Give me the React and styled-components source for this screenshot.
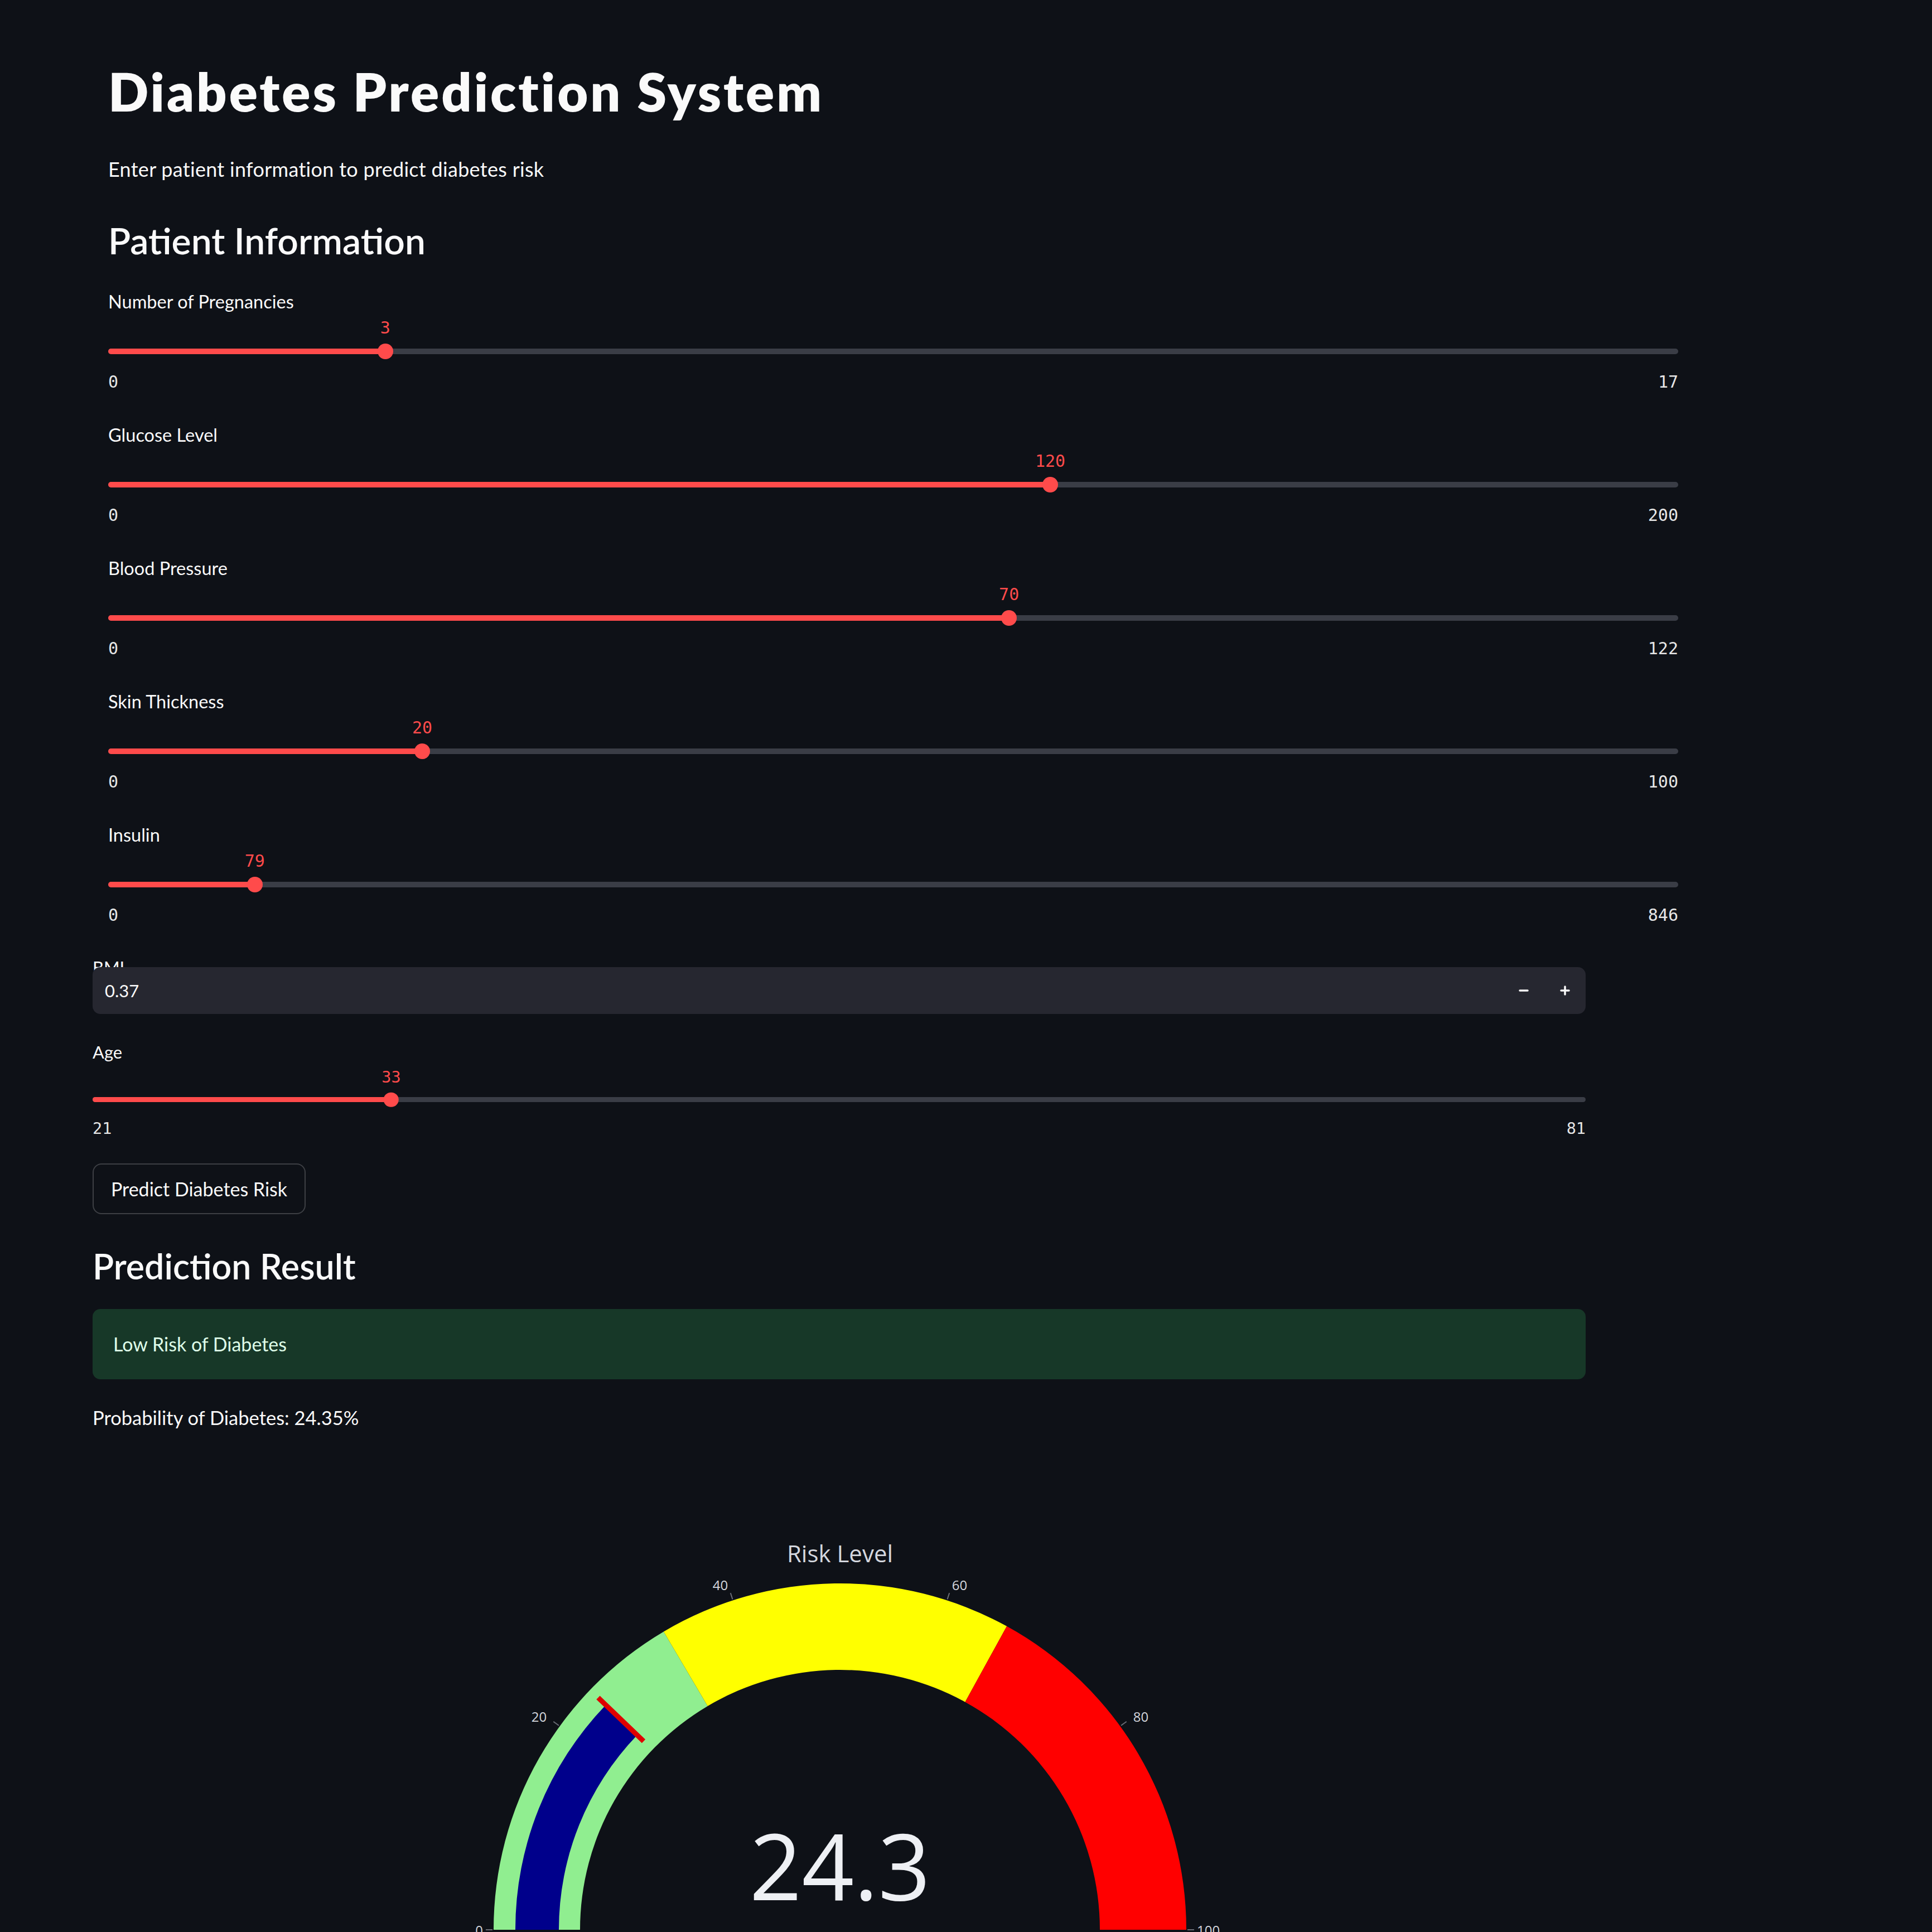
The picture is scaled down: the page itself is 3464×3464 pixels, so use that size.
import React from "react";
import styled, { createGlobalStyle } from "styled-components";
import { Minus, Plus } from "lucide-react";

const GlobalStyle = createGlobalStyle`
  html, body {
    margin: 0;
    background-color: #0e1117;
  }

  body {
    font-family: "Lato", "Noto Sans", sans-serif;
    color: #fafafa;
  }
`;

const Page = styled.div`
  height: 3464px;
  overflow: hidden;
  box-sizing: border-box;
  padding-top: 106px;
`;

const Section = styled.section`
  --k: ${(p) => p.$k};
  margin-left: ${(p) => p.$left}px;
  width: ${(p) => p.$width}px;
`;

const Title = styled.h1`
  margin: 0;
  font-size: 95px;
  line-height: 1.2;
  font-weight: 800;
  letter-spacing: 4px;
`;

const Subtitle = styled.p`
  margin: 61px 0 0;
  font-size: 36px;
  line-height: 44px;
  letter-spacing: 0.3px;
`;

const SectionHeading = styled.h2`
  margin: calc(69px * var(--k)) 0 0;
  font-size: calc(66px * var(--k));
  line-height: calc(74px * var(--k));
  font-weight: 600;
`;

const ResultHeading = styled(SectionHeading)`
  margin-top: 58px;
`;

const SliderList = styled.div`
  margin-top: calc(51px * var(--k));
`;

const SliderBlock = styled.div`
  margin-bottom: calc(53px * var(--k));
`;

const FieldLabel = styled.label`
  display: block;
  font-size: calc(32.5px * var(--k));
  line-height: calc(44px * var(--k));
  color: #fafafa;
`;

const Rail = styled.div`
  position: relative;
  display: flex;
  align-items: center;
  height: calc(28px * var(--k));
  margin-top: calc(53px * var(--k));
`;

const Track = styled.div`
  width: 100%;
  height: calc(10px * var(--k));
  border-radius: 6px;
  background-color: #3a3d46;
  overflow: hidden;
`;

const Fill = styled.div`
  height: 100%;
  background-color: #ff4b4b;
`;

const Thumb = styled.div`
  position: absolute;
  top: 50%;
  width: calc(28px * var(--k));
  height: calc(28px * var(--k));
  border-radius: 50%;
  background-color: #ff4b4b;
  transform: translate(-50%, -50%);
`;

const ThumbValue = styled.div`
  position: absolute;
  left: 50%;
  bottom: calc(100% + 8px * var(--k));
  transform: translateX(-50%);
  font-family: "DejaVu Sans Mono", "Liberation Mono", monospace;
  font-size: calc(30px * var(--k));
  line-height: calc(40px * var(--k));
  color: #ff4b4b;
  white-space: nowrap;
`;

const Ticks = styled.div`
  display: flex;
  justify-content: space-between;
  margin-top: calc(21px * var(--k));
  font-family: "DejaVu Sans Mono", "Liberation Mono", monospace;
  font-size: calc(30px * var(--k));
  line-height: calc(40px * var(--k));
  color: #e6e6e6;
`;

const NumberBox = styled.div`
  position: relative;
  display: flex;
  align-items: center;
  height: 84px;
  margin-top: -22px;
  border-radius: 14px;
  background-color: #262730;
`;

const NumberValue = styled.span`
  flex: 1;
  padding-left: 22px;
  font-size: 31px;
  color: #fafafa;
`;

const StepButton = styled.span`
  display: flex;
  align-items: center;
  justify-content: center;
  width: 74px;
  height: 100%;
  color: #fafafa;
`;

const PredictButton = styled.button`
  display: flex;
  align-items: center;
  justify-content: center;
  width: 382px;
  height: 91px;
  margin-top: -7px;
  padding: 0;
  border: 2px solid rgba(250, 250, 250, 0.2);
  border-radius: 16px;
  background: transparent;
  font-family: inherit;
  font-size: 34px;
  color: #fafafa;
`;

const Alert = styled.div`
  display: flex;
  align-items: center;
  height: 126px;
  margin-top: 41px;
  padding-left: 37px;
  border-radius: 14px;
  background-color: #173828;
  color: #dffde9;
  font-size: 34px;
`;

const Probability = styled.p`
  margin: 48px 0 0;
  font-size: 34.5px;
  line-height: 42px;
`;

const GaugeSvg = styled.svg`
  display: block;
  width: 100%;
  height: 864px;
  margin-top: 36px;
  overflow: visible;

  text {
    font-family: "Open Sans", "Noto Sans", sans-serif;
  }
`;

const Slider = ({ label, value, min, max }) => {
  const pct = ((value - min) / (max - min)) * 100;
  return (
    <SliderBlock>
      <FieldLabel>{label}</FieldLabel>
      <Rail>
        <Track>
          <Fill style={{ width: `${pct}%` }} />
        </Track>
        <Thumb style={{ left: `${pct}%` }}>
          <ThumbValue>{value}</ThumbValue>
        </Thumb>
      </Rail>
      <Ticks>
        <span>{min}</span>
        <span>{max}</span>
      </Ticks>
    </SliderBlock>
  );
};

// gauge geometry, in the svg's own pixels
const cx = 1340;
const cy = 861;
const R_OUT = 621;
const R_IN = 466;

const polar = (r, v) => {
  const a = Math.PI * (1 - v / 100);
  return [cx + r * Math.cos(a), cy - r * Math.sin(a)];
};

const band = (v1, v2, r1, r2) => {
  const [ax, ay] = polar(r2, v1);
  const [bx, by] = polar(r2, v2);
  const [c_x, c_y] = polar(r1, v2);
  const [dx, dy] = polar(r1, v1);
  return `M${ax} ${ay} A${r2} ${r2} 0 0 1 ${bx} ${by} L${c_x} ${c_y} A${r1} ${r1} 0 0 0 ${dx} ${dy} Z`;
};

const steps = [
  { from: 0, to: 33, color: "#90ee90" },
  { from: 33, to: 66, color: "#ffff00" },
  { from: 66, to: 100, color: "#ff0000" },
];

const Gauge = ({ value }) => {
  const [t1x, t1y] = polar(488, value);
  const [t2x, t2y] = polar(601, value);
  return (
    <GaugeSvg viewBox="0 0 2677 864">
      <text x={cx} y={185} textAnchor="middle" dominantBaseline="central" fontSize="42" fill="#d4d7de">
        Risk Level
      </text>
      {steps.map((s) => (
        <path key={s.from} d={band(s.from, s.to, R_IN, R_OUT)} fill={s.color} />
      ))}
      <path d={band(0, value, 504, 582)} fill="#00008b" />
      <line x1={t1x} y1={t1y} x2={t2x} y2={t2y} stroke="#e00000" strokeWidth="9" />
      {[0, 20, 40, 60, 80, 100].map((t) => {
        const [ax, ay] = polar(R_OUT + 2, t);
        const [bx, by] = polar(R_OUT + 14, t);
        const [lx, ly] = polar(t === 0 || t === 100 ? 640 : 650, t);
        return (
          <g key={t}>
            <line x1={ax} y1={ay} x2={bx} y2={by} stroke="#6b6e76" strokeWidth="2" />
            <text
              x={lx}
              y={ly}
              textAnchor={t < 50 ? "end" : "start"}
              dominantBaseline="central"
              fontSize="24"
              fill="#d4d7de"
            >
              {t}
            </text>
          </g>
        );
      })}
      <text x={cx} y={808} textAnchor="middle" fontSize="164" fill="#eef0f4">
        24.3
      </text>
    </GaugeSvg>
  );
};

const sliders = [
  { label: "Number of Pregnancies", value: 3, min: 0, max: 17 },
  { label: "Glucose Level", value: 120, min: 0, max: 200 },
  { label: "Blood Pressure", value: 70, min: 0, max: 122 },
  { label: "Skin Thickness", value: 20, min: 0, max: 100 },
  { label: "Insulin", value: 79, min: 0, max: 846 },
];

const App = () => {
  return (
    <Page>
      <GlobalStyle />
      <Section $k={1} $left={194} $width={2815}>
        <Title>Diabetes Prediction System</Title>
        <Subtitle>Enter patient information to predict diabetes risk</Subtitle>
        <SectionHeading>Patient Information</SectionHeading>
        <SliderList>
          {sliders.map((s) => (
            <Slider key={s.label} {...s} />
          ))}
        </SliderList>
      </Section>

      <Section $k={0.95} $left={166} $width={2677}>
        <FieldLabel>BMI</FieldLabel>
        <NumberBox>
          <NumberValue>0.37</NumberValue>
          <StepButton>
            <Minus size={24} strokeWidth={3.5} />
          </StepButton>
          <StepButton>
            <Plus size={24} strokeWidth={3.5} />
          </StepButton>
        </NumberBox>
        <SliderList>
          <Slider label="Age" value={33} min={21} max={81} />
        </SliderList>
        <PredictButton>Predict Diabetes Risk</PredictButton>
        <ResultHeading>Prediction Result</ResultHeading>
        <Alert>Low Risk of Diabetes</Alert>
        <Probability>Probability of Diabetes: 24.35%</Probability>
        <Gauge value={24.35} />
      </Section>
    </Page>
  );
};

export default App;
